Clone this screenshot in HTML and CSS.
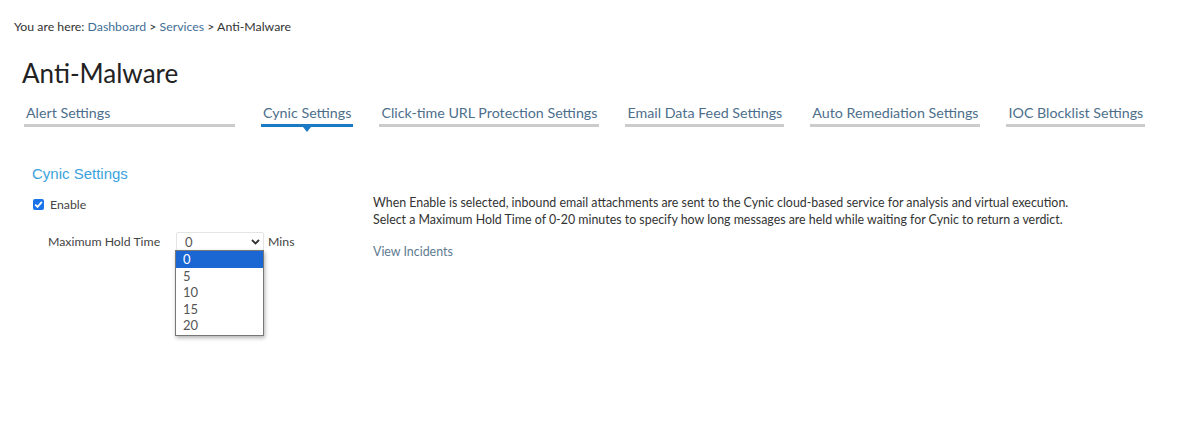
FILE: index.html
```html
<!DOCTYPE html>
<html>
<head>
<meta charset="utf-8">
<link rel="stylesheet" href="styles.css">
</head>
<body>
<div class="page">
  <div class="crumbs">You are here: <a class="crumb-link">Dashboard</a> &gt; <a class="crumb-link">Services</a> &gt; Anti-Malware</div>
  <h1 class="title">Anti-Malware</h1>
  <div class="tabs">
    <div class="tab tab-alert">Alert Settings</div>
    <div class="tab active">Cynic Settings</div>
    <div class="tab">Click-time URL Protection Settings</div>
    <div class="tab">Email Data Feed Settings</div>
    <div class="tab">Auto Remediation Settings</div>
    <div class="tab">IOC Blocklist Settings</div>
  </div>
  <div class="section">
    <div class="left">
      <h2 class="sec-title">Cynic Settings</h2>
      <label class="enable"><span class="checkbox"><svg width="9" height="9" viewBox="0 0 9 9"><path d="M1.2 4.6 L3.5 6.9 L7.9 1.8" fill="none" stroke="#fff" stroke-width="1.8"/></svg></span>Enable</label>
      <div class="hold-row">
        <span class="hold-label">Maximum Hold Time</span>
        <div class="select-wrap">
          <div class="select"><span>0</span><svg width="9" height="6" viewBox="0 0 9 6"><path d="M1 1 L4.5 4.5 L8 1" fill="none" stroke="#333" stroke-width="1.8"/></svg></div>
          <div class="options">
            <div class="opt sel">0</div>
            <div class="opt">5</div>
            <div class="opt">10</div>
            <div class="opt">15</div>
            <div class="opt">20</div>
          </div>
        </div>
        <span class="mins">Mins</span>
      </div>
    </div>
    <div class="right">
      <p class="desc">When Enable is selected, inbound email attachments are sent to the Cynic cloud-based service for analysis and virtual execution.<br>Select a Maximum Hold Time of 0-20 minutes to specify how long messages are held while waiting for Cynic to return a verdict.</p>
      <a class="incidents">View Incidents</a>
    </div>
  </div>
</div>
</body>
</html>
```
FILE: styles.css
```css
html, body { margin: 0; padding: 0; background: #fff; }
body { min-height: 421px; font-family: "Lato", "Open Sans", sans-serif; color: #333; }
.page { padding: 19px 14px 0 14px; }
.crumbs { font-size: 12.3px; line-height: 16px; color: #333; }
.crumb-link { color: #3f6e95; }
.title { margin: 22px 0 0 8px; font-size: 26px; line-height: 32px; font-weight: 400; color: #222; }
.tabs { display: flex; gap: 26px; margin: 15px 0 0 10px; }
.tab { font-size: 14.25px; line-height: 18px; color: #4d6f8c; padding: 0 2px 2px 2px; border-bottom: 3px solid #cccccc; position: relative; }
.tab-alert { width: 207px; }
.tab.active { border-bottom-color: #1a7bc4; }
.tab.active::after { content: ""; position: absolute; left: 50%; bottom: -8px; margin-left: -4px; border-left: 4px solid transparent; border-right: 4px solid transparent; border-top: 5px solid #1a7bc4; }
.section { display: flex; margin-top: 38px; padding-left: 18px; }
.left { width: 341px; }
.sec-title { margin: 0; font-family: "Liberation Sans", Arial, sans-serif; font-size: 15px; line-height: 18px; font-weight: 400; color: #3ba3dc; }
.enable { display: flex; align-items: center; margin-top: 14px; font-size: 12.3px; color: #444; }
.checkbox { width: 11px; height: 11px; background: #1a73e8; border-radius: 2px; display: inline-flex; align-items: center; justify-content: center; margin-right: 6px; margin-left: 1px; }
.hold-row { display: flex; align-items: center; margin-top: 20px; padding-left: 16px; font-size: 12.3px; color: #444; }
.hold-label { width: 128px; }
.select-wrap { position: relative; }
.select { border: 1px solid #e4e4e4; border-radius: 2px; display: flex; align-items: center; justify-content: space-between; padding: 0 3px 0 8px; box-sizing: border-box; width: 88px; height: 19px; color: #555; font-size: 13px; }
.options { position: absolute; top: 18px; left: -1px; width: 89px; border: 1px solid #777; background: #fff; box-shadow: 1px 2px 4px rgba(0,0,0,0.3); box-sizing: border-box; padding-bottom: 1px; z-index: 2; }
.opt { height: 16.5px; line-height: 16px; padding-left: 7px; font-size: 13px; color: #555; }
.opt.sel { background: #1a66d2; color: #fff; }
.mins { margin-left: 4px; }
.right { padding-top: 29px; }
.desc { margin: 0; font-size: 12.4px; line-height: 17px; color: #333; }
.incidents { display: block; margin-top: 16px; font-size: 12.4px; color: #5d7a90; }
```
